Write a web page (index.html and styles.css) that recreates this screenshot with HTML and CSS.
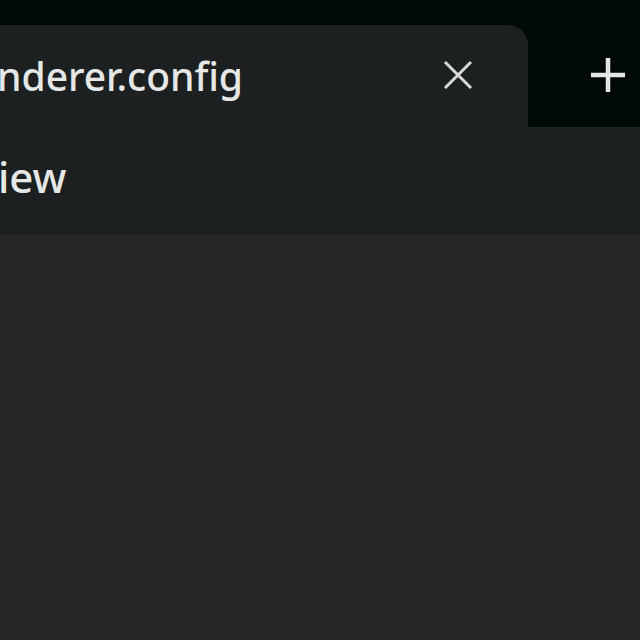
FILE: index.html
```html
<!DOCTYPE html>
<html>
<head>
<meta charset="utf-8">
<link rel="stylesheet" href="styles.css">
</head>
<body>
<div class="window">
  <div class="tabstrip">
    <div class="tab">
      <span class="tab-title">nderer.config</span>
      <svg class="tab-close" width="30" height="30" viewBox="0 0 30 30"><path d="M2 2L28 28M28 2L2 28" stroke="#d8dada" stroke-width="3" fill="none"/></svg>
    </div>
    <div class="newtab">
      <svg width="36" height="36" viewBox="0 0 36 36"><path d="M18 1V35M1 18H35" stroke="#e4e6e6" stroke-width="4.5" fill="none"/></svg>
    </div>
  </div>
  <div class="toolbar"><span class="toolbar-label">iew</span></div>
  <div class="content"></div>
</div>
</body>
</html>
```
FILE: styles.css
```css
html, body { margin: 0; padding: 0; }
body { background: #262626; width: 640px; height: 640px; overflow: hidden; font-family: "Noto Sans", "Open Sans", sans-serif; }
.window { display: flex; flex-direction: column; height: 640px; }
.tabstrip { background: #020a08; height: 127px; display: flex; align-items: flex-end; }
.tab { width: 528px; height: 102px; background: #1c2020; border-top-right-radius: 20px; display: flex; align-items: center; justify-content: space-between; padding-right: 55px; box-sizing: border-box; overflow: hidden; }
.tab-title { color: #e6e8e8; font-size: 39px; font-weight: 500; margin-left: -3px; line-height: 1; margin-top: -1px; }
.tab-close { display: block; margin-top: -3px; }
.newtab { flex: 1; display: flex; justify-content: center; align-items: center; height: 102px; padding-left: 48px; }
.newtab svg { display: block; margin-top: -3px; }
.toolbar { background: #1c2020; height: 108px; display: flex; align-items: center; }
.toolbar-label { color: #e6e8e8; font-size: 42px; font-weight: 500; margin-left: -2px; line-height: 1; margin-top: -8px; }
.content { flex: 1; background: #262626; }
```
